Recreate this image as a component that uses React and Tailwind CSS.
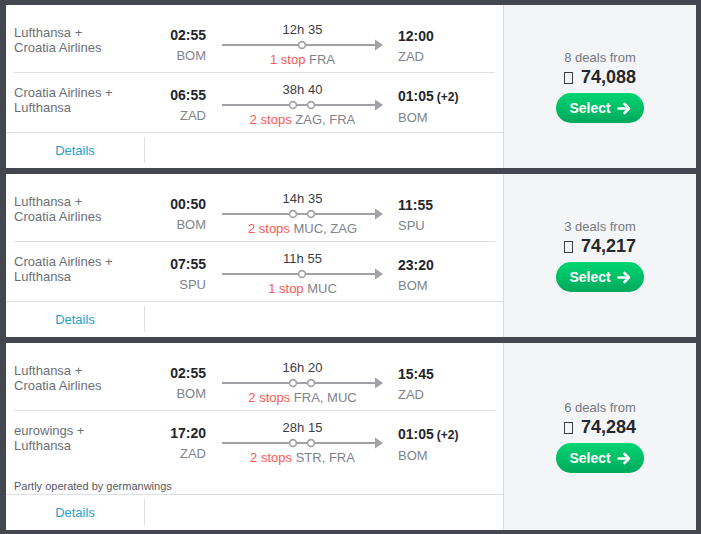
import React from 'react';

const itineraries = [
  {
    deals: 8,
    price: '74,088',
    legs: [
      { airline: ['Lufthansa +', 'Croatia Airlines'], dep: '02:55', from: 'BOM', dur: '12h 35', stops: '1 stop', via: 'FRA', arr: '12:00', to: 'ZAD' },
      { airline: ['Croatia Airlines +', 'Lufthansa'], dep: '06:55', from: 'ZAD', dur: '38h 40', stops: '2 stops', via: 'ZAG, FRA', arr: '01:05', plus: '(+2)', to: 'BOM' },
    ],
  },
  {
    deals: 3,
    price: '74,217',
    legs: [
      { airline: ['Lufthansa +', 'Croatia Airlines'], dep: '00:50', from: 'BOM', dur: '14h 35', stops: '2 stops', via: 'MUC, ZAG', arr: '11:55', to: 'SPU' },
      { airline: ['Croatia Airlines +', 'Lufthansa'], dep: '07:55', from: 'SPU', dur: '11h 55', stops: '1 stop', via: 'MUC', arr: '23:20', to: 'BOM' },
    ],
  },
  {
    deals: 6,
    price: '74,284',
    note: 'Partly operated by germanwings',
    legs: [
      { airline: ['Lufthansa +', 'Croatia Airlines'], dep: '02:55', from: 'BOM', dur: '16h 20', stops: '2 stops', via: 'FRA, MUC', arr: '15:45', to: 'ZAD' },
      { airline: ['eurowings +', 'Lufthansa'], dep: '17:20', from: 'ZAD', dur: '28h 15', stops: '2 stops', via: 'STR, FRA', arr: '01:05', plus: '(+2)', to: 'BOM' },
    ],
  },
];

function RouteLine({ count }) {
  // stop markers sit on the middle of the line
  const xs = count === 1 ? [80] : [71, 89];
  return (
    <svg width="161" height="12" viewBox="0 0 161 12" className="block">
      <line x1="0" y1="6" x2="154" y2="6" stroke="#a0a2a8" strokeWidth="2" />
      <polygon points="153,0.5 161,6 153,11.5" fill="#a0a2a8" />
      {xs.map((x) => (
        <circle key={x} cx={x} cy="6" r="3.4" fill="#fff" stroke="#a0a2a8" strokeWidth="1.6" />
      ))}
    </svg>
  );
}

function Leg({ leg }) {
  const count = leg.stops.startsWith('1') ? 1 : 2;
  return (
    <div className="flex h-[50px]">
      {/* Airline */}
      <div className="w-[120px] pt-[3px] text-[13px] leading-[15px] text-[#6c6f77]">
        <div>{leg.airline[0]}</div>
        <div>{leg.airline[1]}</div>
      </div>

      {/* Departure */}
      <div className="w-[72px] pt-[5px] text-right">
        <div className="text-[14px] leading-[17px] font-bold text-[#23252a]">{leg.dep}</div>
        <div className="mt-[4px] text-[13px] leading-[16px] text-[#80838b]">{leg.from}</div>
      </div>

      {/* Duration + stops */}
      <div className="ml-[16px] w-[161px] pt-[1px] flex flex-col items-center">
        <div className="text-[13px] leading-[14px] text-[#3b3e44]">{leg.dur}</div>
        <div className="mt-[2px]">
          <RouteLine count={count} />
        </div>
        <div className="mt-[2px] text-[13px] leading-[14px] whitespace-nowrap">
          <span className="text-[#fb5a55]">{leg.stops}</span>{' '}
          <span className="text-[#80838b]">{leg.via}</span>
        </div>
      </div>

      {/* Arrival */}
      <div className="ml-[15px] flex-1 pt-[5px]">
        <div className="leading-[17px] text-[#23252a] whitespace-nowrap">
          <span className="text-[14px] font-bold">{leg.arr}</span>
          {leg.plus && <span className="ml-[3px] text-[12px] font-semibold">{leg.plus}</span>}
        </div>
        <div className="mt-[4px] text-[13px] leading-[16px] text-[#80838b]">{leg.to}</div>
      </div>
    </div>
  );
}

function Card({ item }) {
  return (
    <div className="flex bg-white">
      <div className="w-[497px]">
        <div className="px-[8px]">
          <div className="pt-[17px] border-b border-[#dcdfe3]">
            <Leg leg={item.legs[0]} />
          </div>
          <div className={item.note ? 'pt-[9px] pb-[1px]' : 'pt-[9px]'}>
            <Leg leg={item.legs[1]} />
            {item.note && (
              <div className="mt-[10px] text-[11px] leading-[13px] text-[#55585f]">{item.note}</div>
            )}
          </div>
        </div>
        <div className="flex border-t border-[#dcdfe3] h-[36px]">
          <div className="w-[138px] flex items-center justify-center text-[13px] text-[#27a2c9]">Details</div>
          <div className="mt-[4px] h-[26px] w-px bg-[#dcdfe3]" />
        </div>
      </div>

      {/* Price panel */}
      <div className="flex-1 border-l border-[#d9dce0] bg-[#f4f5f7] flex flex-col items-center justify-center">
        <div className="text-[13px] leading-[15px] text-[#75787f]">{item.deals} deals from</div>
        <div className="mt-[2px] flex items-center leading-[21px] text-[#25272c]">
          <span className="inline-block w-[9px] h-[12px] border border-[#3a3c42] mr-[8px]" />
          <span className="text-[18px] font-bold">{item.price}</span>
        </div>
        <button className="mt-[5px] w-[88px] h-[30px] rounded-full bg-gradient-to-b from-[#00d672] to-[#00a95c] flex items-center justify-center gap-[6px] text-white text-[14px] font-bold">
          Select
          <svg width="14" height="13" viewBox="0 0 14 13" fill="none" stroke="#fff" strokeWidth="2.6" strokeLinecap="round" strokeLinejoin="round">
            <path d="M1.5 6.5h10M7.5 2l4.5 4.5L7.5 11" />
          </svg>
        </button>
      </div>
    </div>
  );
}

export default function App() {
  return (
    <div className="w-[701px] h-[534px] bg-[#44474f] pt-[5px] pl-[6px] pr-[5px] font-['Liberation_Sans',Arial,sans-serif]">
      <div className="flex flex-col gap-[6px]">
        {itineraries.map((item, i) => (
          <Card key={i} item={item} />
        ))}
      </div>
    </div>
  );
}
